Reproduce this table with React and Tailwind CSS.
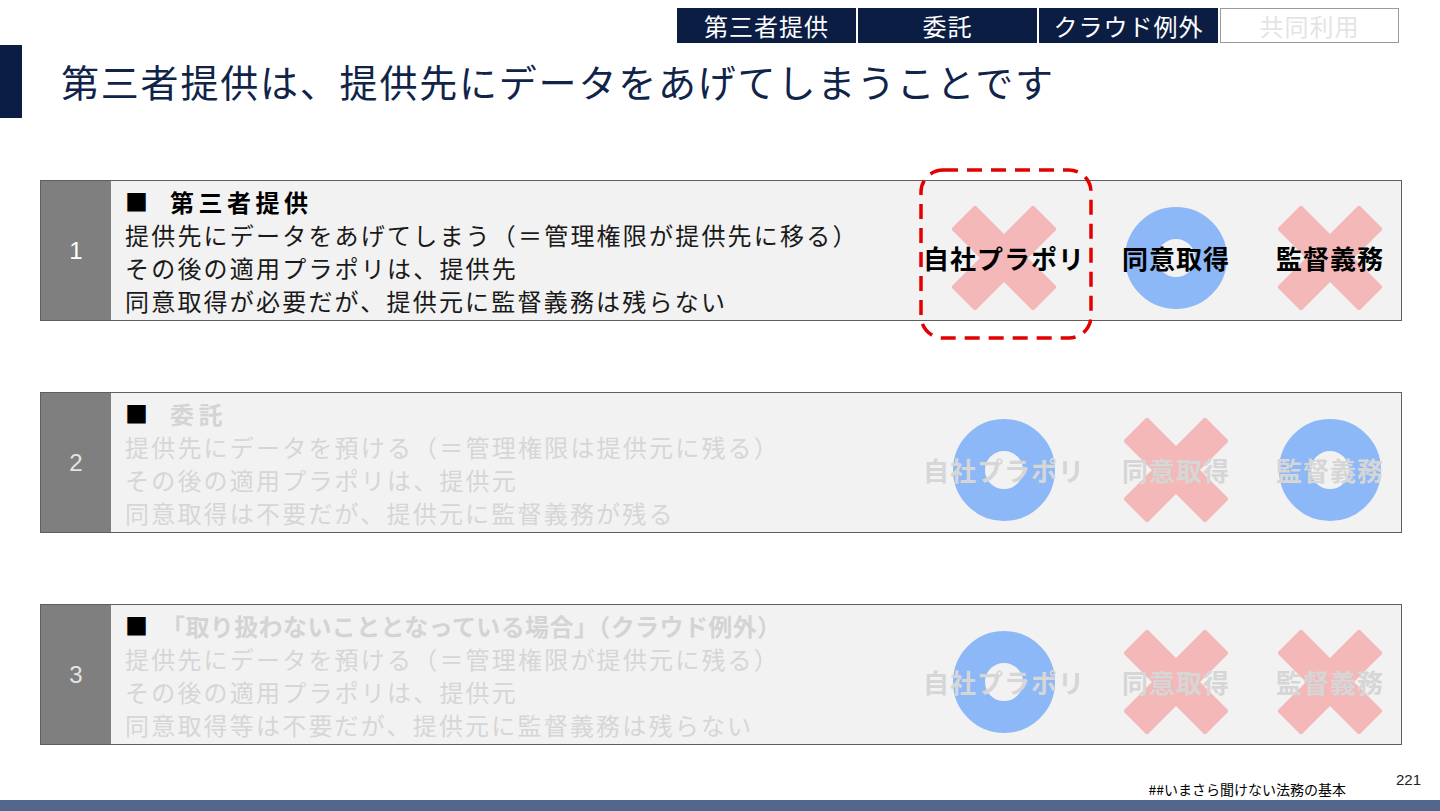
// Slide: 第三者提供 vs 委託 vs クラウド例外
import React from 'react';

const jp = { fontFamily: '"Noto Sans CJK JP", "Noto Sans", sans-serif' };

function Cross() {
  return (
    <svg width="104" height="104" viewBox="0 0 104 104" className="absolute">
      <g transform="translate(52 52)" fill="#f4b8b8">
        <rect x="-58" y="-17" width="116" height="34" transform="rotate(45)" />
        <rect x="-58" y="-17" width="116" height="34" transform="rotate(-45)" />
      </g>
    </svg>
  );
}

function Ring() {
  return (
    <svg width="102" height="102" viewBox="0 0 102 102" className="absolute">
      <circle cx="51" cy="51" r="35" fill="none" stroke="#8db8f7" strokeWidth="32" />
    </svg>
  );
}

function Mark({ ok, label, active, width }) {
  return (
    <div className={`relative flex items-center justify-center pt-[14px] ${width}`}>
      {ok ? <Ring /> : <Cross />}
      <span
        className={`relative font-bold text-[26px] tracking-[1px] whitespace-nowrap ${active ? 'text-black' : 'text-[#d6d6d6]'}`}
        style={jp}
      >
        {label}
      </span>
    </div>
  );
}

const rows = [
  {
    no: '1',
    active: true,
    title: '第三者提供',
    lines: [
      '提供先にデータをあげてしまう（＝管理権限が提供先に移る）',
      'その後の適用プラポリは、提供先',
      '同意取得が必要だが、提供元に監督義務は残らない',
    ],
    marks: [false, true, false],
  },
  {
    no: '2',
    active: false,
    title: '委託',
    lines: [
      '提供先にデータを預ける（＝管理権限は提供元に残る）',
      'その後の適用プラポリは、提供元',
      '同意取得は不要だが、提供元に監督義務が残る',
    ],
    marks: [true, false, true],
  },
  {
    no: '3',
    active: false,
    title: '「取り扱わないこととなっている場合」（クラウド例外）',
    tight: true,
    lines: [
      '提供先にデータを預ける（＝管理権限が提供元に残る）',
      'その後の適用プラポリは、提供元',
      '同意取得等は不要だが、提供元に監督義務は残らない',
    ],
    marks: [true, false, false],
  },
];

const labels = ['自社プラポリ', '同意取得', '監督義務'];
const widths = ['w-[178px]', 'w-[166px]', 'w-[142px]'];

function Row({ row }) {
  return (
    <div className="flex h-[141px] border border-[#5f5f5f] bg-[#f2f2f2]">
      <div className="w-[70px] bg-[#7f7f7f] flex items-center justify-center">
        <span
          className={`text-[24px] ${row.active ? 'text-white' : 'text-[#e4e4e4]'}`}
          style={{ fontFamily: '"Liberation Sans", Arial, sans-serif' }}
        >
          {row.no}
        </span>
      </div>
      <div className="flex-1 pl-[14px] pt-[4px] leading-[33px]" style={jp}>
        <div className="flex font-bold text-[24px] whitespace-nowrap">
          <span className={`text-black text-[23px] ${row.tight ? 'w-[36px]' : 'w-[45px]'}`}>■</span>
          <span
            className={`${row.tight ? 'tracking-[0.4px]' : 'tracking-[4.5px]'} ${row.active ? 'text-black' : 'text-[#d4d4d4]'}`}
          >
            {row.title}
          </span>
        </div>
        {row.lines.map((l) => (
          <div
            key={l}
            className={`text-[24px] tracking-[2.2px] whitespace-nowrap ${row.active ? 'text-[#1a1a1a]' : 'text-[#d6d6d6]'}`}
          >
            {l}
          </div>
        ))}
      </div>
      <div className="flex">
        {row.marks.map((ok, i) => (
          <div key={i} className="relative flex">
            <Mark ok={ok} label={labels[i]} active={row.active} width={widths[i]} />
            {row.active && i === 0 && (
              <svg className="absolute top-[-13px] left-[4px]" width="174" height="172" viewBox="0 0 174 172">
                <rect
                  x="2"
                  y="2"
                  width="170"
                  height="168"
                  rx="22"
                  fill="none"
                  stroke="#e30000"
                  strokeWidth="3.5"
                  strokeDasharray="15 9"
                />
              </svg>
            )}
          </div>
        ))}
      </div>
    </div>
  );
}

export default function App() {
  const tabs = ['第三者提供', '委託', 'クラウド例外', '共同利用'];
  return (
    <div className="w-[1440px] h-[811px] bg-white flex flex-col overflow-hidden" style={jp}>
      <div className="flex justify-end gap-[2px] pt-[8px] pr-[41px]">
        {tabs.map((t, i) =>
          i < 3 ? (
            <div key={t} className="w-[179px] h-[35px] bg-[#0c1d44] text-white text-[24px] flex items-center justify-center tracking-[1px]">
              {t}
            </div>
          ) : (
            <div key={t} className="w-[179px] h-[35px] bg-white border border-[#9a9a9a] text-[#e4e4e4] text-[24px] flex items-center justify-center tracking-[1px]">
              {t}
            </div>
          )
        )}
      </div>
      <div className="flex items-center h-[73px] mt-[2px]">
        <div className="w-[22px] h-full bg-[#0c1d44]" />
        <h1 className="ml-[39px] text-[38px] tracking-[1.8px] text-[#10244a] leading-none pb-[2px]">
          第三者提供は、提供先にデータをあげてしまうことです
        </h1>
      </div>
      <div className="flex flex-col gap-[71px] mt-[62px] pl-[40px] pr-[38px]">
        {rows.map((r) => (
          <Row key={r.no} row={r} />
        ))}
      </div>
      <div className="flex-1 flex items-end justify-end pr-[19px]">
        <span className="text-[14px] text-black">##いまさら聞けない法務の基本</span>
        <span
          className="ml-[50px] mb-[9px] text-[15px] text-[#222]"
          style={{ fontFamily: '"Liberation Sans", Arial, sans-serif' }}
        >
          221
        </span>
      </div>
      <div className="h-[11px] bg-[#50668b]" />
    </div>
  );
}
